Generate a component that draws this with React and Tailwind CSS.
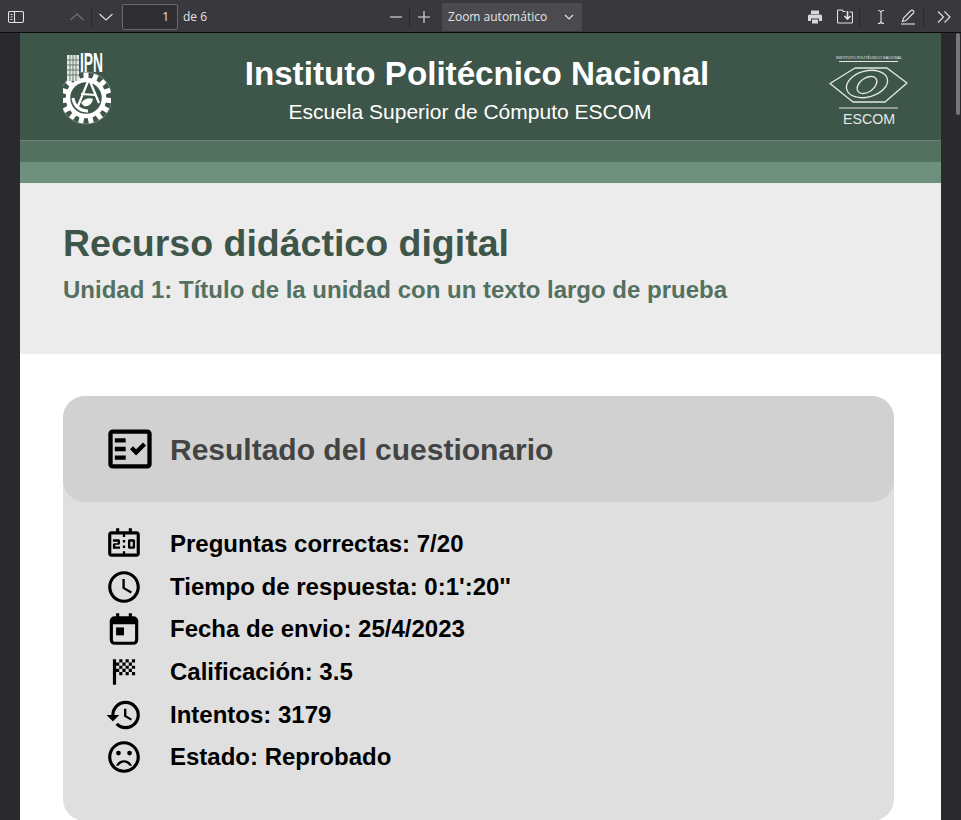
import React from 'react';
import {
  MdOutlineFactCheck,
  MdOutlineScoreboard,
  MdOutlineAccessTime,
  MdSportsScore,
  MdHistory,
  MdOutlineSentimentDissatisfied,
} from 'react-icons/md';

// calendar with the filled square on the left, the package one has it on the right
const CalendarIcon = ({ size, className }) => (
  <svg width={size} height={size} viewBox="0 0 24 24" className={className} fill="currentColor">
    <path d="M7 2h2v2h6V2h2v2h1a3 3 0 0 1 3 3v12a3 3 0 0 1-3 3H6a3 3 0 0 1-3-3V7a3 3 0 0 1 3-3h1zM5 9v10a1 1 0 0 0 1 1h12a1 1 0 0 0 1-1V9z" />
    <rect x="7" y="11" width="5" height="5" />
  </svg>
);

const rows = [
  { Icon: MdOutlineScoreboard, text: 'Preguntas correctas: 7/20' },
  { Icon: MdOutlineAccessTime, text: "Tiempo de respuesta: 0:1':20''" },
  { Icon: CalendarIcon, text: 'Fecha de envio: 25/4/2023' },
  { Icon: MdSportsScore, text: 'Calificación: 3.5' },
  { Icon: MdHistory, text: 'Intentos: 3179' },
  { Icon: MdOutlineSentimentDissatisfied, text: 'Estado: Reprobado' },
];

const ToolIcon = ({ children, className = '' }) => (
  <svg
    width="16"
    height="16"
    viewBox="0 0 16 16"
    fill="none"
    stroke="currentColor"
    strokeWidth="1.1"
    className={className}
  >
    {children}
  </svg>
);

const Toolbar = () => (
  <div className="box-content flex h-[30px] shrink-0 items-center border-b border-[#0c0c0d] bg-[#38383d] pt-[2px] text-[#e4e4e6]">
    <ToolIcon className="ml-[8px]">
      <rect x="0.5" y="2.5" width="15" height="11" rx="1.5" />
      <path d="M6.5 2.5v11M2.5 5.5h2M2.5 8h2M2.5 10.5h2" />
    </ToolIcon>
    <ToolIcon className="ml-[45px] text-[#77777b]">
      <path d="M1.5 11L8 5l6.5 6" />
    </ToolIcon>
    <div className="mx-[6px] h-[20px] w-px bg-[#2a2a2e]" />
    <ToolIcon>
      <path d="M1.5 5L8 11l6.5-6" />
    </ToolIcon>
    <div className="ml-[8px] flex h-[26px] w-[56px] items-center justify-end rounded-[2px] border border-[#6a6a6e] bg-[#2f2f33] pr-[8px] text-[12px]">
      1
    </div>
    <span className="ml-[5px] text-[12px]">de 6</span>
    <ToolIcon className="ml-[181px]">
      <path d="M2 8h12" />
    </ToolIcon>
    <div className="ml-[5px] mr-[6px] h-[20px] w-px bg-[#2a2a2e]" />
    <ToolIcon>
      <path d="M2 8h12M8 2v12" />
    </ToolIcon>
    <div className="ml-[10px] flex h-[28px] w-[140px] items-center justify-between bg-[#4a4a4f] pl-[6px] pr-[8px] text-[12px]">
      <span>Zoom automático</span>
      <svg width="10" height="6" viewBox="0 0 10 6" fill="none" stroke="currentColor" strokeWidth="1.2">
        <path d="M1 1l4 4 4-4" />
      </svg>
    </div>
    <svg width="16" height="16" viewBox="0 0 16 16" fill="currentColor" className="ml-[225px] text-[#d8d8da]">
      <path d="M4 1.5h8v3.5H4zM2.5 5.5h11a1.5 1.5 0 0 1 1.5 1.5v5h-3v-2.500H4V12H1V7a1.5 1.5 0 0 1 1.5-1.5zM5 10.500h6v4H5z" />
    </svg>
    <ToolIcon className="ml-[14px]">
      <path d="M8.500 2.500H6.500L5 1H1.500A1 1 0 0 0 .5 2v11a1 1 0 0 0 1 1h13a1 1 0 0 0 1-1V4a1 1 0 0 0-1-1h-2" />
      <path d="M10.500 2v7M7.500 7l3 3 3-3" strokeWidth="1.6" />
    </ToolIcon>
    <div className="mx-[6px] h-[20px] w-px bg-[#2a2a2e]" />
    <ToolIcon className="ml-[7px]">
      <path d="M5 1.500c2 0 3 .5 3 2v9c0 1.500-1 2-3 2M11 1.500c-2 0-3 .5-3 2v9c0 1.500 1 2 3 2" />
    </ToolIcon>
    <ToolIcon className="ml-[11px]">
      <path d="M2.500 12.500l1-3.500 7.500-7.500a1.400 1.400 0 0 1 2 0l.5.5a1.400 1.400 0 0 1 0 2L6 11.500z" />
      <path d="M1 15h14" />
    </ToolIcon>
    <div className="ml-[7px] mr-[12px] h-[20px] w-px bg-[#2a2a2e]" />
    <ToolIcon>
      <path d="M2 2.500L7.500 8 2 13.500M8.500 2.500L14 8l-5.500 5.500" />
    </ToolIcon>
  </div>
);

// gear teeth around the IPN crest
const teeth = Array.from({ length: 15 }, (_, i) => i * 24);

const IpnLogo = () => (
  <svg width="48" height="80" viewBox="0 -4 48 80" className="shrink-0">
    {/* Engrane */}
    <circle cx="23" cy="47" r="26" fill="none" stroke="#a9b7af" strokeWidth="0.5" />
    <g fill="#fff">
      {teeth.map((a) => (
        <rect key={a} x="20.500" y="21.500" width="5" height="7" transform={`rotate(${a} 23 47)`} />
      ))}
    </g>
    <circle cx="23" cy="47" r="18" fill="none" stroke="#fff" strokeWidth="4.500" />
    {/* Compas y aguila central */}
    <path d="M26 28L15 55M26 28l10 24M18 43l15 1" stroke="#fff" strokeWidth="2.200" fill="none" />
    <path d="M10 47c1 8 7 13 15 13" fill="none" stroke="#fff" strokeWidth="3" />
    <path d="M18 52c3-4 8-6 12-4-1 5-5 8-9 7z" fill="#fff" />
    {/* Edificio */}
    <rect x="4" y="4" width="12" height="26" fill="#e4e9e6" />
    <path d="M7 4v26M10 4v26M13 4v26M4 9h12M4 14h12M4 19h12M4 24h12" stroke="#3e5549" strokeWidth="0.7" />
    <text
      transform="translate(17 21) scale(1 2.3)"
      fill="#fff"
      fontFamily="Liberation Sans"
      fontWeight="700"
      fontSize="12"
      textLength="23"
      lengthAdjust="spacingAndGlyphs"
    >
      IPN
    </text>
  </svg>
);

const EscomLogo = () => (
  <svg width="80" height="76" viewBox="0 0 80 76" className="mt-[7px] shrink-0 text-[#e4e8e5]">
    <text x="40" y="7" textAnchor="middle" fill="currentColor" fontFamily="Liberation Sans" fontSize="3.4" textLength="66" lengthAdjust="spacingAndGlyphs">
      INSTITUTO POLITÉCNICO NACIONAL
    </text>
    <path d="M10 9.500h59" stroke="currentColor" strokeWidth="1" />
    <path
      d="M1 31.500L26 16h32l20 15-22 19H24z"
      fill="none"
      stroke="currentColor"
      strokeWidth="1.400"
      strokeLinejoin="round"
    />
    <ellipse cx="38" cy="32" rx="21" ry="13" transform="rotate(-15 38 32)" fill="none" stroke="currentColor" strokeWidth="1.300" />
    <ellipse cx="38" cy="33" rx="11" ry="7" transform="rotate(-35 38 33)" fill="none" stroke="currentColor" strokeWidth="1.300" />
    <path d="M10 56h59" stroke="currentColor" strokeWidth="1.200" />
    <text x="40" y="72" textAnchor="middle" fill="currentColor" fontFamily="Liberation Sans" fontSize="15.5" textLength="52" lengthAdjust="spacingAndGlyphs">
      ESCOM
    </text>
  </svg>
);

export default function App() {
  return (
    <div className="flex h-[820px] w-[961px] flex-col overflow-hidden bg-[#2a2a2e] font-['Open_Sans',sans-serif]">
      <Toolbar />
      <div className="relative flex-1 overflow-hidden pl-[20px] pr-[20px]">
        <div className="bg-white pb-[40px] font-['Liberation_Sans',sans-serif]">
          {/* Cabecera */}
          <div className="flex h-[107px] items-center justify-between bg-[#3e5549] pl-[43px] pr-[32px]">
            <IpnLogo />
            <div className="mt-[3px] flex flex-col items-center text-white">
              <h1 className="ml-[14px] pt-[2px] text-[33.2px] leading-[40px] font-bold">Instituto Politécnico Nacional</h1>
              <p className="mt-[6px] text-[21px] leading-[24px]">Escuela Superior de Cómputo ESCOM</p>
            </div>
            <EscomLogo />
          </div>
          <div className="h-[22px] border-t border-[#6f8578] bg-[#54705f]" />
          <div className="h-[21px] bg-[#6e917d]" />

          {/* Titulo */}
          <div className="h-[171px] bg-[#ececec] pl-[43px] pt-[38px]">
            <h2 className="text-[37.5px] leading-[44px] font-bold text-[#3e5549]">Recurso didáctico digital</h2>
            <h3 className="mt-[11px] text-[24px] leading-[28px] font-bold text-[#54705f]">
              Unidad 1: Título de la unidad con un texto largo de prueba
            </h3>
          </div>

          {/* Resultado */}
          <div className="pl-[43px] pr-[47px] pt-[42px]">
            <div className="rounded-[22px] bg-[#dfdfdf] pb-[43px]">
              <div className="flex h-[106px] items-center gap-[14px] rounded-[22px] bg-[#d1d1d1] pl-[41px]">
                <MdOutlineFactCheck size={52} className="text-black" />
                <span className="text-[30px] font-bold text-[#444444]">Resultado del cuestionario</span>
              </div>
              <ul className="mt-[22px] flex flex-col gap-[2px] pl-[42px]">
                {rows.map(({ Icon, text }) => (
                  <li key={text} className="flex h-[40.6px] items-center gap-[27px] text-[24px] font-bold text-black">
                    <Icon size={38} className="shrink-0" />
                    <span>{text}</span>
                  </li>
                ))}
              </ul>
            </div>
          </div>
        </div>
        {/* Scrollbar */}
        <div className="absolute right-[1px] top-0 h-[82px] w-[4px] rounded-[2px] bg-[#77777b]" />
      </div>
    </div>
  );
}
